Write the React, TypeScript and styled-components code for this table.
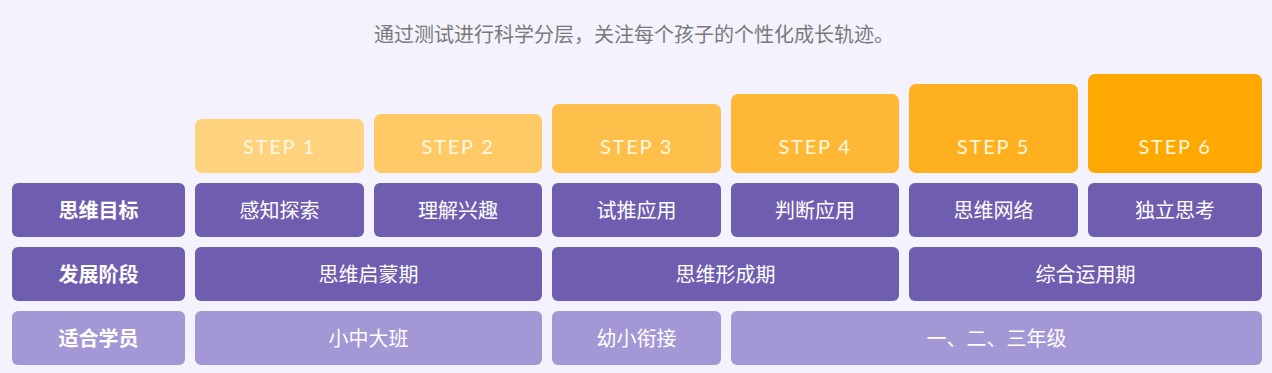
import React from "react";
import styled, { createGlobalStyle } from "styled-components";

const GlobalStyle = createGlobalStyle`
  html, body {
    margin: 0;
    padding: 0;
    background: #f4f3fd;
  }
  body {
    font-family: "Noto Sans CJK SC", "Noto Sans", sans-serif;
  }
`;

const Page = styled.div`
  width: 1272px;
  height: 373px;
  background: #f4f3fd;
  overflow: hidden;
`;

const Intro = styled.p`
  margin: 0;
  padding: 20px 4px 0 0;
  height: 28px;
  line-height: 28px;
  text-align: center;
  font-size: 20px;
  color: #7a7a7a;
`;

const Table = styled.div`
  display: grid;
  grid-template-columns: 173px 169px 168px 169px 168px 169px 174px;
  grid-template-rows: 99px repeat(3, 54px);
  gap: 10px;
  margin: 26px 0 0 12px;
  align-items: end;
`;

const STEP_COLORS = ["#ffd37e", "#ffc966", "#ffc04b", "#ffb835", "#ffb01f", "#ffa802"];
const STEP_HEIGHTS = [54, 59, 69, 79, 89, 99];

const StepBox = styled.div<{ $color: string; $height: number }>`
  height: ${(p) => p.$height}px;
  background: ${(p) => p.$color};
  border-radius: 7px;
  display: flex;
  align-items: flex-end;
  justify-content: center;
`;

const StepLabel = styled.span`
  font-family: Lato, "Open Sans", sans-serif;
  font-size: 20px;
  letter-spacing: 1.8px;
  line-height: 53px;
  color: #fff8e2;
`;

const Cell = styled.div<{ $tone: "dark" | "light"; $span?: number }>`
  grid-column: span ${(p) => p.$span ?? 1};
  height: 54px;
  border-radius: 6px;
  background: ${(p) => (p.$tone === "dark" ? "#6f5eb0" : "#a497d5")};
  color: #fff;
  display: flex;
  align-items: center;
  justify-content: center;
  font-size: 20px;
  line-height: 1;
`;

const RowHead = styled(Cell)`
  font-weight: 700;
`;

type Row = {
  title: string;
  tone: "dark" | "light";
  cells: { text: string; span: number }[];
};

const rows: Row[] = [
  {
    title: "思维目标",
    tone: "dark",
    cells: [
      { text: "感知探索", span: 1 },
      { text: "理解兴趣", span: 1 },
      { text: "试推应用", span: 1 },
      { text: "判断应用", span: 1 },
      { text: "思维网络", span: 1 },
      { text: "独立思考", span: 1 },
    ],
  },
  {
    title: "发展阶段",
    tone: "dark",
    cells: [
      { text: "思维启蒙期", span: 2 },
      { text: "思维形成期", span: 2 },
      { text: "综合运用期", span: 2 },
    ],
  },
  {
    title: "适合学员",
    tone: "light",
    cells: [
      { text: "小中大班", span: 2 },
      { text: "幼小衔接", span: 1 },
      { text: "一、二、三年级", span: 3 },
    ],
  },
];

const App = () => {
  return (
    <Page>
      <GlobalStyle />
      <Intro>通过测试进行科学分层，关注每个孩子的个性化成长轨迹。</Intro>
      <Table>
        <div />
        {STEP_COLORS.map((color, i) => (
          <StepBox key={i} $color={color} $height={STEP_HEIGHTS[i]}>
            <StepLabel>STEP {i + 1}</StepLabel>
          </StepBox>
        ))}
        {rows.map((row) => (
          <React.Fragment key={row.title}>
            <RowHead $tone={row.tone}>{row.title}</RowHead>
            {row.cells.map((cell) => (
              <Cell key={cell.text} $tone={row.tone} $span={cell.span}>
                {cell.text}
              </Cell>
            ))}
          </React.Fragment>
        ))}
      </Table>
    </Page>
  );
};

export default App;
